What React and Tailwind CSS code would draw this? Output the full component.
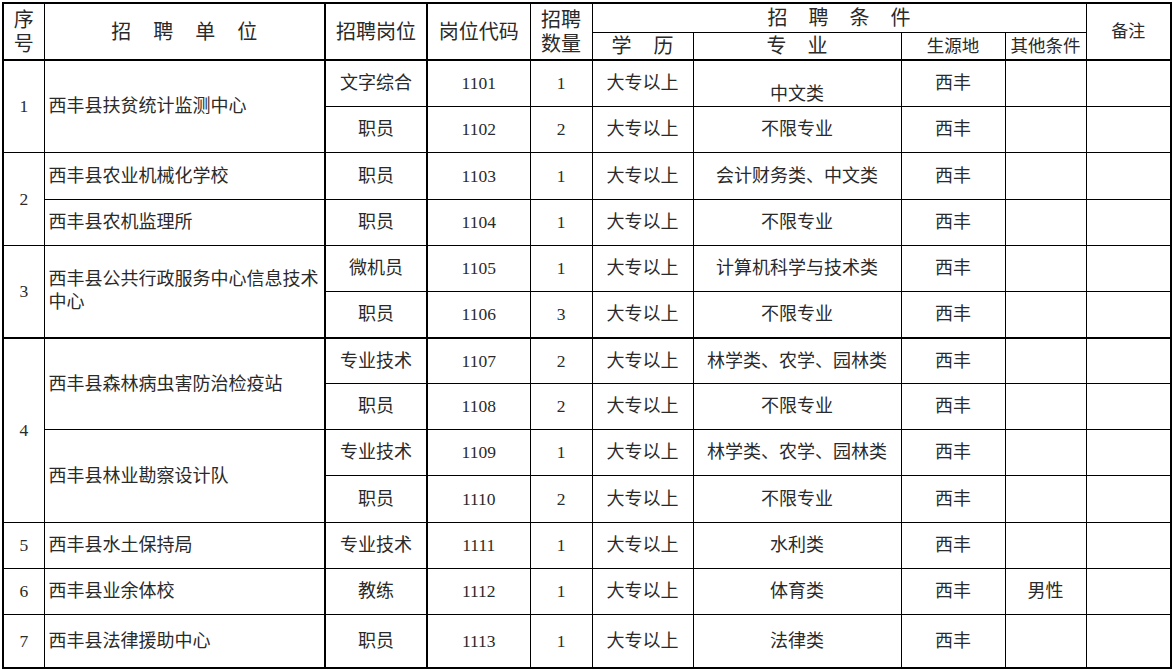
const CELL = 'border border-black p-0 text-center align-middle font-normal'
const DIGIT = 'text-[17.5px]'

function Cell({ className = '', children, ...rest }) {
  return (
    <td className={`${CELL} ${className}`} {...rest}>
      {children}
    </td>
  )
}

function Spaced({ text, gap = 'gap-[22px]' }) {
  return (
    <div className={`flex justify-center ${gap}`}>
      {text.split('').map((ch, i) => <span key={i}>{ch}</span>)}
    </div>
  )
}

function JobCells({ job, code, count, major, origin = '西丰', other = '', top = '', majorClass = '' }) {
  return (
    <>
      <Cell className={`border-l-2 border-r-2 ${top}`}>{job}</Cell>
      <Cell className={`${DIGIT} ${top}`}>{code}</Cell>
      <Cell className={`${DIGIT} ${top}`}>{count}</Cell>
      <Cell className={top}>大专以上</Cell>
      <Cell className={`${top} ${majorClass}`}>{major}</Cell>
      <Cell className={top}>{origin}</Cell>
      <Cell className={top}>{other}</Cell>
      <Cell className={top}></Cell>
    </>
  )
}

export default function App() {
  return (
    <div className="h-[670px] w-[1172px] bg-white pl-[2px] pt-[2px] font-['Liberation_Serif','Noto_Sans_CJK_SC',serif] text-[18px] leading-[22px] text-[#2a2a2a]">
      <table className="w-[1168px] table-fixed border-collapse border-2 border-black">
        <colgroup>
          <col className="w-[41px]" />
          <col className="w-[281px]" />
          <col className="w-[102px]" />
          <col className="w-[103px]" />
          <col className="w-[62px]" />
          <col className="w-[101px]" />
          <col className="w-[208px]" />
          <col className="w-[104px]" />
          <col className="w-[81px]" />
          <col className="w-[85px]" />
        </colgroup>
        <thead className="text-[20px] leading-[24px]">
          <tr className="h-[29px]">
            <Cell rowSpan={2}>
              <div>序</div>
              <div>号</div>
            </Cell>
            <Cell rowSpan={2}><Spaced text="招聘单位" /></Cell>
            <Cell rowSpan={2} className="border-l-2 border-r-2">招聘岗位</Cell>
            <Cell rowSpan={2}>岗位代码</Cell>
            <Cell rowSpan={2}>
              <div>招聘</div>
              <div>数量</div>
            </Cell>
            <Cell colSpan={4}><Spaced text="招聘条件" gap="gap-[21px]" /></Cell>
            <Cell rowSpan={2} className="text-[17px]">备注</Cell>
          </tr>
          <tr className="h-[28px]">
            <Cell><Spaced text="学历" /></Cell>
            <Cell><Spaced text="专业" gap="gap-[21px]" /></Cell>
            <Cell className="text-[17.5px]">生源地</Cell>
            <Cell className="text-[17.5px]">其他条件</Cell>
          </tr>
        </thead>
        <tbody>
          <tr className="h-[46px]">
            <Cell rowSpan={2} className="border-t-2 text-[17.5px]">1</Cell>
            <Cell rowSpan={2} className="border-t-2 pl-[4px] text-left">西丰县扶贫统计监测中心</Cell>
            <JobCells job="文字综合" code="1101" count="1" major="中文类" top="border-t-2" majorClass="!align-bottom pb-[1px]" />
          </tr>
          <tr className="h-[46px]">
            <JobCells job="职员" code="1102" count="2" major="不限专业" />
          </tr>
          <tr className="h-[47px]">
            <Cell rowSpan={2} className="text-[17.5px]">2</Cell>
            <Cell className="pl-[4px] text-left">西丰县农业机械化学校</Cell>
            <JobCells job="职员" code="1103" count="1" major="会计财务类、中文类" />
          </tr>
          <tr className="h-[46px]">
            <Cell className="pl-[4px] text-left">西丰县农机监理所</Cell>
            <JobCells job="职员" code="1104" count="1" major="不限专业" />
          </tr>
          <tr className="h-[46px]">
            <Cell rowSpan={2} className="text-[17.5px]">3</Cell>
            <Cell rowSpan={2} className="pl-[4px] pr-[2px] text-left leading-[23px]">西丰县公共行政服务中心信息技术中心</Cell>
            <JobCells job="微机员" code="1105" count="1" major="计算机科学与技术类" />
          </tr>
          <tr className="h-[47px]">
            <JobCells job="职员" code="1106" count="3" major="不限专业" />
          </tr>
          <tr className="h-[45px]">
            <Cell rowSpan={4} className="border-t-2 text-[17.5px]">4</Cell>
            <Cell rowSpan={2} className="border-t-2 pl-[4px] text-left">西丰县森林病虫害防治检疫站</Cell>
            <JobCells job="专业技术" code="1107" count="2" major="林学类、农学、园林类" top="border-t-2" />
          </tr>
          <tr className="h-[46px]">
            <JobCells job="职员" code="1108" count="2" major="不限专业" />
          </tr>
          <tr className="h-[46px]">
            <Cell rowSpan={2} className="pl-[4px] text-left">西丰县林业勘察设计队</Cell>
            <JobCells job="专业技术" code="1109" count="1" major="林学类、农学、园林类" />
          </tr>
          <tr className="h-[47px]">
            <JobCells job="职员" code="1110" count="2" major="不限专业" />
          </tr>
          <tr className="h-[46px]">
            <Cell className="text-[17.5px]">5</Cell>
            <Cell className="pl-[4px] text-left">西丰县水土保持局</Cell>
            <JobCells job="专业技术" code="1111" count="1" major="水利类" />
          </tr>
          <tr className="h-[46px]">
            <Cell className="text-[17.5px]">6</Cell>
            <Cell className="pl-[4px] text-left">西丰县业余体校</Cell>
            <JobCells job="教练" code="1112" count="1" major="体育类" other="男性" />
          </tr>
          <tr className="h-[54px]">
            <Cell className="text-[17.5px]">7</Cell>
            <Cell className="pl-[4px] text-left">西丰县法律援助中心</Cell>
            <JobCells job="职员" code="1113" count="1" major="法律类" />
          </tr>
        </tbody>
      </table>
    </div>
  )
}
